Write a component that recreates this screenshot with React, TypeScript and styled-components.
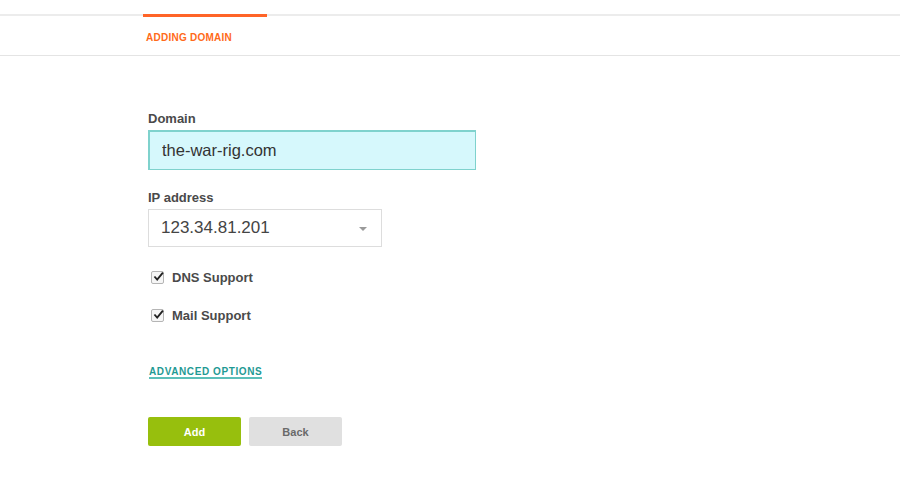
import React, { useState } from 'react';
import styled, { createGlobalStyle } from 'styled-components';

const GlobalStyle = createGlobalStyle`
  body {
    margin: 0;
    background: #ffffff;
    font-family: 'Liberation Sans', Arial, sans-serif;
  }
`;

const App: React.FC = () => {
  const [dns, setDns] = useState(true);
  const [mail, setMail] = useState(true);

  return (
    <Page>
      <GlobalStyle />
      <TopStrip />
      <TabRow>
        <Tab>ADDING DOMAIN</Tab>
      </TabRow>

      <Form>
        <Field>
          <Label>Domain</Label>
          <DomainInput defaultValue='the-war-rig.com' />
        </Field>

        <Field>
          <Label>IP address</Label>
          <Select>
            <SelectValue>123.34.81.201</SelectValue>
            <Caret />
          </Select>
        </Field>

        <CheckList>
          <CheckRow onClick={() => setDns(!dns)}>
            <CheckBox checked={dns} />
            <CheckLabel>DNS Support</CheckLabel>
          </CheckRow>
          <CheckRow onClick={() => setMail(!mail)}>
            <CheckBox checked={mail} />
            <CheckLabel>Mail Support</CheckLabel>
          </CheckRow>
        </CheckList>

        <AdvancedLink href='#'>ADVANCED OPTIONS</AdvancedLink>

        <Actions>
          <Button $primary>Add</Button>
          <Button>Back</Button>
        </Actions>
      </Form>
    </Page>
  );
};

const CheckBox: React.FC<{ checked: boolean }> = ({ checked }) => (
  <Box>
    {checked && (
      <svg width='11' height='11' viewBox='0 0 10 10'>
        <path
          d='M1.3 5 L3.8 7.8 L9 1.4'
          fill='none'
          stroke='#222'
          strokeWidth='1.7'
        />
      </svg>
    )}
  </Box>
);

export default App;

// --- styled-components ---
const Page = styled.div`
  width: 100%;
  min-height: 479px;
  background: #ffffff;
`;

const TopStrip = styled.div`
  height: 14px;
`;

const TabRow = styled.div`
  display: flex;
  height: 39px;
  border-top: 2px solid #ececec;
  border-bottom: 1px solid #e4e4e4;
  padding-left: 143px;
`;

const Tab = styled.div`
  width: 124px;
  box-sizing: border-box;
  margin-top: -2px;
  border-top: 3px solid #ff6428;
  padding: 15px 0 0 3px;
  font-size: 10px;
  font-weight: 700;
  letter-spacing: 0.25px;
  color: #ff6a1a;
`;

const Form = styled.div`
  display: flex;
  flex-direction: column;
  align-items: flex-start;
  padding: 55px 0 0 148px;
`;

const Field = styled.div`
  display: flex;
  flex-direction: column;
  margin-bottom: 20px;
`;

const Label = styled.label`
  font-size: 13px;
  font-weight: 700;
  line-height: 15px;
  color: #4a4a4a;
  margin-bottom: 4px;
`;

const DomainInput = styled.input`
  width: 328px;
  height: 40px;
  box-sizing: border-box;
  background: #d6f8fc;
  border: 1px solid #7fd2cd;
  border-left-width: 2px;
  border-top-width: 2px;
  padding: 0 12px;
  font-family: 'Liberation Sans', Arial, sans-serif;
  font-size: 16.5px;
  color: #333333;
  outline: none;
`;

const Select = styled.div`
  width: 234px;
  height: 38px;
  box-sizing: border-box;
  border: 1px solid #dddddd;
  display: flex;
  align-items: center;
  justify-content: space-between;
  padding: 0 14px 0 12px;
`;

const SelectValue = styled.span`
  font-size: 17px;
  color: #444444;
`;

const Caret = styled.span`
  width: 0;
  height: 0;
  border-left: 4px solid transparent;
  border-right: 4px solid transparent;
  border-top: 4px solid #9a9a9a;
  margin-top: 1px;
`;

const CheckList = styled.div`
  display: flex;
  flex-direction: column;
  gap: 24px;
  margin-top: 3px;
`;

const CheckRow = styled.div`
  display: flex;
  align-items: center;
  height: 14px;
  padding-left: 3px;
  cursor: pointer;
`;

const Box = styled.span`
  width: 11px;
  height: 11px;
  border: 1px solid #b5b5b5;
  border-radius: 2px;
  background: #f6f6f6;
  display: flex;
  align-items: center;
  justify-content: center;
  margin-right: 8px;
  svg {
    margin-top: -2px;
    margin-right: -2px;
  }
`;

const CheckLabel = styled.span`
  font-size: 13px;
  font-weight: 700;
  color: #4a4a4a;
`;

const AdvancedLink = styled.a`
  margin-top: 44px;
  margin-left: 1px;
  font-size: 10px;
  font-weight: 700;
  letter-spacing: 0.6px;
  color: #1f9a94;
  text-decoration: none;
  border-bottom: 2px solid #5bbfb9;
  line-height: 11px;
`;

const Actions = styled.div`
  display: flex;
  gap: 8px;
  margin-top: 38px;
`;

const Button = styled.button<{ $primary?: boolean }>`
  width: 93px;
  height: 29px;
  border: none;
  border-radius: 2px;
  font-family: 'Liberation Sans', Arial, sans-serif;
  font-size: 11px;
  font-weight: 700;
  cursor: pointer;
  background: ${(p) => (p.$primary ? '#97bf0d' : '#e0e0e0')};
  color: ${(p) => (p.$primary ? '#ffffff' : '#6a6a6a')};
`;
